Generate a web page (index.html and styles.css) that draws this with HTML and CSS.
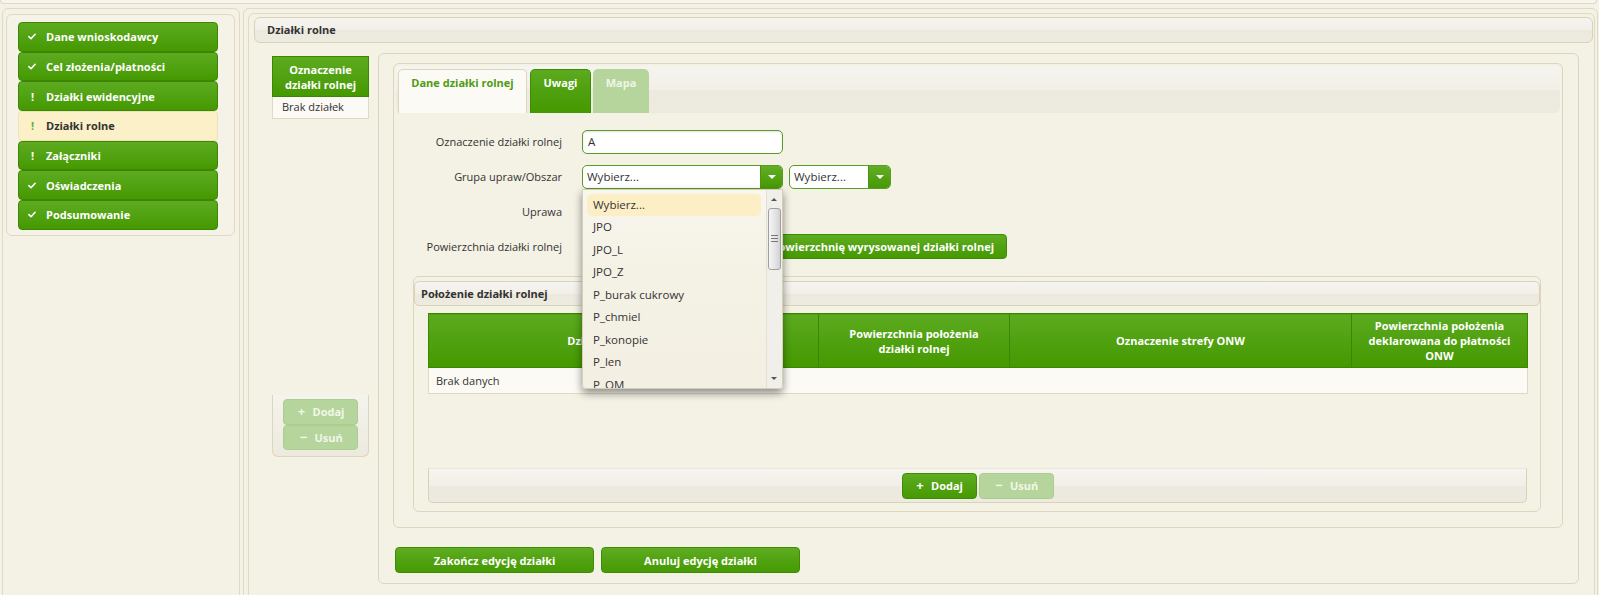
FILE: index.html
```html
<!DOCTYPE html>
<html lang="pl">
<head>
<meta charset="utf-8">
<title>Działki rolne</title>
<link rel="stylesheet" href="styles.css">
</head>
<body>
<div class="top-strip"></div>
<div class="layout">
  <aside class="sidebar">
    <nav class="nav-box">
      <div class="nav-item"><span class="nav-icon"><svg class="check" viewBox="0 0 9 7"><polyline points="1,3.6 3.4,6 8,1"/></svg></span>Dane wnioskodawcy</div>
      <div class="nav-item"><span class="nav-icon"><svg class="check" viewBox="0 0 9 7"><polyline points="1,3.6 3.4,6 8,1"/></svg></span>Cel złożenia/płatności</div>
      <div class="nav-item"><span class="nav-icon excl">!</span>Działki ewidencyjne</div>
      <div class="nav-item nav-active"><span class="nav-icon excl">!</span>Działki rolne</div>
      <div class="nav-item"><span class="nav-icon excl">!</span>Załączniki</div>
      <div class="nav-item"><span class="nav-icon"><svg class="check" viewBox="0 0 9 7"><polyline points="1,3.6 3.4,6 8,1"/></svg></span>Oświadczenia</div>
      <div class="nav-item"><span class="nav-icon"><svg class="check" viewBox="0 0 9 7"><polyline points="1,3.6 3.4,6 8,1"/></svg></span>Podsumowanie</div>
    </nav>
  </aside>
  <main class="main">
    <div class="main-inner">
      <div class="page-header">Działki rolne</div>
      <div class="content-row">
        <div class="plot-list">
          <div class="plot-list-head">Oznaczenie<br>działki rolnej</div>
          <div class="plot-list-row">Brak działek</div>
          <div class="plot-list-actions">
            <button class="btn btn-sm btn-disabled"><span class="sign">+</span>Dodaj</button>
            <button class="btn btn-sm btn-disabled"><span class="sign">&minus;</span>Usuń</button>
          </div>
        </div>
        <section class="editor">
          <div class="tab-panel">
            <div class="tab-strip">
              <div class="tab tab-active">Dane działki rolnej</div>
              <div class="tab tab-green">Uwagi</div>
              <div class="tab tab-disabled">Mapa</div>
            </div>
            <div class="form-grid">
              <label class="form-label">Oznaczenie działki rolnej</label>
              <div class="field"><div class="input">A</div></div>
              <label class="form-label">Grupa upraw/Obszar</label>
              <div class="field selects">
                <div class="select select-wide">
                  <span class="select-text">Wybierz...</span><span class="select-arrow"></span>
                  <div class="dropdown">
                    <ul class="dropdown-list">
                      <li class="dd-item dd-selected">Wybierz...</li>
                      <li class="dd-item">JPO</li>
                      <li class="dd-item">JPO_L</li>
                      <li class="dd-item">JPO_Z</li>
                      <li class="dd-item">P_burak cukrowy</li>
                      <li class="dd-item">P_chmiel</li>
                      <li class="dd-item">P_konopie</li>
                      <li class="dd-item">P_len</li>
                      <li class="dd-item">P_OM</li>
                    </ul>
                    <div class="scrollbar">
                      <span class="sb-up"></span>
                      <span class="sb-thumb"><i></i><i></i><i></i></span>
                      <span class="sb-down"></span>
                    </div>
                  </div>
                </div>
                <div class="select select-narrow">
                  <span class="select-text">Wybierz...</span><span class="select-arrow"></span>
                </div>
              </div>
              <label class="form-label">Uprawa</label>
              <div class="field"></div>
              <label class="form-label">Powierzchnia działki rolnej</label>
              <div class="field"><button class="btn btn-area">Przepisz powierzchnię wyrysowanej działki rolnej</button></div>
            </div>
            <div class="fieldset">
              <div class="fieldset-head">Położenie działki rolnej</div>
              <div class="grid">
                <table class="grid-table">
                  <colgroup>
                    <col class="c1"><col class="c2"><col class="c3"><col class="c4">
                  </colgroup>
                  <thead>
                    <tr>
                      <th>Działka ewidencyjna</th>
                      <th>Powierzchnia położenia<br>działki rolnej</th>
                      <th>Oznaczenie strefy ONW</th>
                      <th>Powierzchnia położenia<br>deklarowana do płatności<br>ONW</th>
                    </tr>
                  </thead>
                  <tbody>
                    <tr><td colspan="4">Brak danych</td></tr>
                  </tbody>
                </table>
                <div class="grid-space"></div>
                <div class="grid-footer">
                  <button class="btn btn-sm btn-green"><span class="sign">+</span>Dodaj</button>
                  <button class="btn btn-sm btn-disabled"><span class="sign">&minus;</span>Usuń</button>
                </div>
              </div>
            </div>
          </div>
          <div class="editor-actions">
            <button class="btn btn-wide btn-green">Zakończ edycję działki</button>
            <button class="btn btn-wide btn-green">Anuluj edycję działki</button>
          </div>
        </section>
      </div>
    </div>
  </main>
</div>
</body>
</html>
```

FILE: styles.css
```css
* { box-sizing: border-box; }
html, body { margin: 0; padding: 0; }
body {
  width: 1599px;
  height: 595px;
  overflow: hidden;
  background: #f4f1e5;
  font-family: "Open Sans", "Liberation Sans", sans-serif;
  font-size: 11px;
  color: #333;
}
button { font-family: inherit; font-size: 11px; margin: 0; }

.top-strip {
  height: 4px;
  margin-right: 2px;
  border: 1px solid #e0d9c3;
  border-top: 0;
  border-radius: 0 0 5px 5px;
  background: #f7f5ed;
}

.layout { display: flex; margin-top: 4px; height: 600px; }

/* sidebar */
.sidebar {
  width: 238px;
  flex: none;
  margin-left: 2px;
  border: 1px solid #e0d9c3;
  border-radius: 6px;
  padding: 5px 4px 0 3px;
}
.nav-box {
  border: 1px solid #e0d9c3;
  border-radius: 6px;
  padding: 7px 11px 5px 11px;
  background: #f5f2e7;
}
.nav-item {
  width: 200px;
  height: 29.7px;
  display: flex;
  align-items: center;
  padding-left: 9px;
  border: 1px solid #3d8604;
  border-radius: 4px;
  background: linear-gradient(to bottom, #5dab20 0%, #51a212 50%, #459900 100%);
  color: #fff;
  font-weight: 700;
}
.nav-icon { width: 18px; flex: none; display: flex; align-items: center; }
.check { width: 8px; height: 7px; }
.check polyline { fill: none; stroke: #fff; stroke-width: 1.8; stroke-linecap: round; stroke-linejoin: round; }
.excl { padding-left: 3px; font-weight: 700; }
.nav-active {
  background: #fcf0c8;
  border-color: #efe3b4;
  color: #333;
}
.nav-active .excl { color: #6aaa38; }

/* main */
.main {
  flex: 1;
  margin-left: 3px;
  margin-right: 1px;
  border: 1px solid #e0d9c3;
  border-radius: 6px;
  padding: 4px 2px 0 4px;
}
.main-inner {
  height: 100%;
  border: 1px solid #e0d9c3;
  border-radius: 6px;
  padding: 3px 1px 0 5px;
}
.page-header, .fieldset-head {
  border: 1px solid #d9d1b8;
  border-radius: 6px;
  background: linear-gradient(to bottom, #f6f4ef 0%, #f2efe8 50%, #ece9de 52%, #edeae0 100%);
  font-weight: 700;
  color: #333;
}
.page-header { height: 26px; line-height: 24px; padding-left: 12px; }

.content-row { display: flex; margin-top: 10px; padding-left: 18px; }

/* left list */
.plot-list { width: 97px; flex: none; margin-top: 3px; display: flex; flex-direction: column; }
.plot-list-head {
  height: 41px;
  display: flex;
  align-items: center;
  justify-content: center;
  text-align: center;
  line-height: 15px;
  border: 1px solid #3d8604;
  background: linear-gradient(to bottom, #5dab20 0%, #51a212 50%, #459900 100%);
  color: #fff;
  font-weight: 700;
}
.plot-list-row {
  height: 22px;
  line-height: 20px;
  padding-left: 9px;
  background: #fbfaf4;
  border: 1px solid #e0d9c3;
  border-top: 0;
}
.plot-list-actions {
  margin-top: 276px;
  height: 62px;
  padding: 4px 0 0 10px;
  border: 1px solid #ddd5bc;
  border-top: 0;
  border-radius: 0 0 6px 6px;
  background: linear-gradient(to bottom, #f5f3ed 0%, #f1eee6 50%, #ece9de 100%);
  display: flex;
  flex-direction: column;
}

/* buttons */
.btn {
  border: 1px solid #3f8a06;
  border-radius: 4px;
  background: linear-gradient(to bottom, #5fad22 0%, #51a212 50%, #469a02 100%);
  color: #fff;
  font-weight: 700;
  padding: 0;
  cursor: default;
}
.btn-sm {
  width: 75px;
  height: 26px;
  display: flex;
  align-items: center;
  justify-content: center;
}
.plot-list-actions .btn-sm { height: 25.5px; }
.sign { display: inline-block; width: 10px; margin-right: 6px; text-align: center; font-size: 13px; line-height: 13px; }
.btn-disabled {
  background: #b6d59c;
  border-color: #abcd8f;
  color: #f1f7ea;
}
.btn-wide { width: 199px; height: 26px; }

/* editor */
.editor {
  width: 1201px;
  height: 531px;
  margin-left: 9px;
  border: 1px solid #ddd5bc;
  border-radius: 6px;
  padding: 9px 15px 11px 14px;
}
.tab-panel {
  height: 465px;
  border: 1px solid #ddd5bc;
  border-radius: 6px;
  padding: 2px;
}
.tab-strip {
  height: 47px;
  display: flex;
  align-items: flex-end;
  padding: 0 0 0 2px;
  border-radius: 5px;
  background: linear-gradient(to bottom, #f6f4ef 0%, #f2efe8 50%, #ece9de 52%, #edeae0 100%);
}
.tab {
  height: 44px;
  padding-top: 6px;
  line-height: 16px;
  text-align: center;
  font-weight: 700;
  border-radius: 5px 5px 0 0;
}
.tab-active {
  width: 129px;
  background: #fbfaf5;
  border: 1px solid #ddd5bc;
  border-bottom: 0;
  color: #4e9c12;
  padding-top: 5px;
}
.tab-green {
  width: 61px;
  margin-left: 3px;
  background: linear-gradient(to bottom, #5dab20 0%, #51a212 40%, #459900 100%);
  color: #fff;
  border: 1px solid #3f8a06;
  border-bottom: 0;
  padding-top: 5px;
}
.tab-disabled {
  width: 56px;
  margin-left: 2px;
  background: #b6d59c;
  color: #eef5e6;
}

/* form */
.form-grid {
  display: grid;
  grid-template-columns: 166px 1fr;
  grid-auto-rows: 25px;
  column-gap: 20px;
  row-gap: 10px;
  padding-top: 16px;
  align-items: center;
}
.form-label { text-align: right; color: #333; }
.field { display: flex; align-items: center; height: 25px; }
.input {
  width: 201px;
  height: 24px;
  line-height: 22px;
  padding-left: 5px;
  border: 1px solid #5a9a27;
  border-radius: 5px;
  background: #fff;
  box-shadow: inset 0 1px 2px rgba(0,0,0,0.12);
  color: #333;
  font-size: 11.5px;
}
.selects { gap: 6px; }
.select {
  position: relative;
  height: 24px;
  display: flex;
  border: 1px solid #5a9a27;
  border-radius: 5px;
  background: #fff;
}
.select-wide { width: 201px; z-index: 10; }
.select-narrow { width: 102px; }
.select-text { flex: 1; line-height: 22px; padding-left: 4px; font-size: 11.5px; color: #333; }
.select-arrow {
  width: 22px;
  flex: none;
  border-radius: 0 4px 4px 0;
  background: linear-gradient(to bottom, #62ae27 0%, #53a314 50%, #479a03 100%);
  border-left: 1px solid #4a9410;
  position: relative;
}
.select-arrow::after {
  content: "";
  position: absolute;
  left: 7px;
  top: 9px;
  border-left: 4px solid transparent;
  border-right: 4px solid transparent;
  border-top: 4px solid #fff;
}

.dropdown {
  position: absolute;
  left: -1px;
  top: calc(100% + 1px);
  width: 201px;
  height: 200px;
  overflow: hidden;
  background: linear-gradient(to bottom, #f8f6ee 0%, #f4f1e5 40%, #f3f0e3 100%);
  border: 1px solid #d6cfb8;
  border-radius: 0 0 4px 4px;
  box-shadow: 0 4px 8px rgba(0,0,0,0.45);
}
.dropdown-list {
  list-style: none;
  margin: 0;
  padding: 4px 21px 0 4px;
}
.dd-item {
  height: 22.5px;
  line-height: 22.5px;
  padding-left: 6px;
  font-size: 11.5px;
  color: #333;
}
.dd-selected { background: #fcefc6; border-radius: 5px; }
.scrollbar {
  position: absolute;
  top: 0;
  right: 0;
  bottom: 0;
  width: 16px;
  background: #f1efe9;
  border-left: 1px solid #e3e0d8;
}
.sb-up, .sb-down {
  position: absolute;
  left: 4px;
  border-left: 3.5px solid transparent;
  border-right: 3.5px solid transparent;
}
.sb-up { top: 8px; border-bottom: 3.5px solid #555; }
.sb-down { bottom: 8px; border-top: 3.5px solid #555; }
.sb-thumb {
  position: absolute;
  left: 1px;
  width: 13px;
  top: 18px;
  height: 62px;
  border: 1px solid #9f9f9f;
  border-radius: 3px;
  background: linear-gradient(to right, #f5f5f5 0%, #e6e6e6 50%, #d2d2d2 100%);
  display: flex;
  flex-direction: column;
  justify-content: center;
  align-items: center;
  gap: 2px;
}
.sb-thumb i { display: block; width: 7px; height: 1px; background: #777; }

.btn-area {
  width: 425px;
  height: 25px;
  text-align: right;
  padding-right: 12px;
}

/* fieldset */
.fieldset {
  height: 236px;
  margin: 17px 19px 0 17px;
  border: 1px solid #ddd5bc;
  border-radius: 6px;
  padding-top: 4px;
}
.fieldset-head { height: 25px; line-height: 23px; padding-left: 6px; border-radius: 5px; }
.grid { margin: 7px 13px 0 14px; }
.grid-table {
  width: 1099px;
  table-layout: fixed;
  border-collapse: collapse;
}
.c1 { width: 390px; }
.c2 { width: 191px; }
.c3 { width: 342px; }
.c4 { width: 176px; }
.grid-table th {
  height: 54px;
  padding: 0 4px;
  line-height: 15px;
  border: 1px solid #3d8604;
  background: linear-gradient(to bottom, #5dab20 0%, #51a212 45%, #459900 100%);
  color: #fff;
  font-weight: 700;
  text-align: center;
}
.grid-table td {
  height: 26px;
  padding-left: 7px;
  background: #fbfaf4;
  border: 1px solid #e0d9c3;
  color: #333;
}
.grid-space { height: 74px; }
.grid-footer {
  height: 35px;
  display: flex;
  justify-content: center;
  align-items: center;
  gap: 2px;
  border: 1px solid #d9d1b8;
  border-top-color: #ebe7da;
  border-radius: 0 0 5px 5px;
  background: linear-gradient(to bottom, #f6f4ef 0%, #f2efe8 50%, #ece9de 52%, #edeae0 100%);
}

.editor-actions { display: flex; gap: 7px; margin-top: 19px; padding-left: 2px; }
```
